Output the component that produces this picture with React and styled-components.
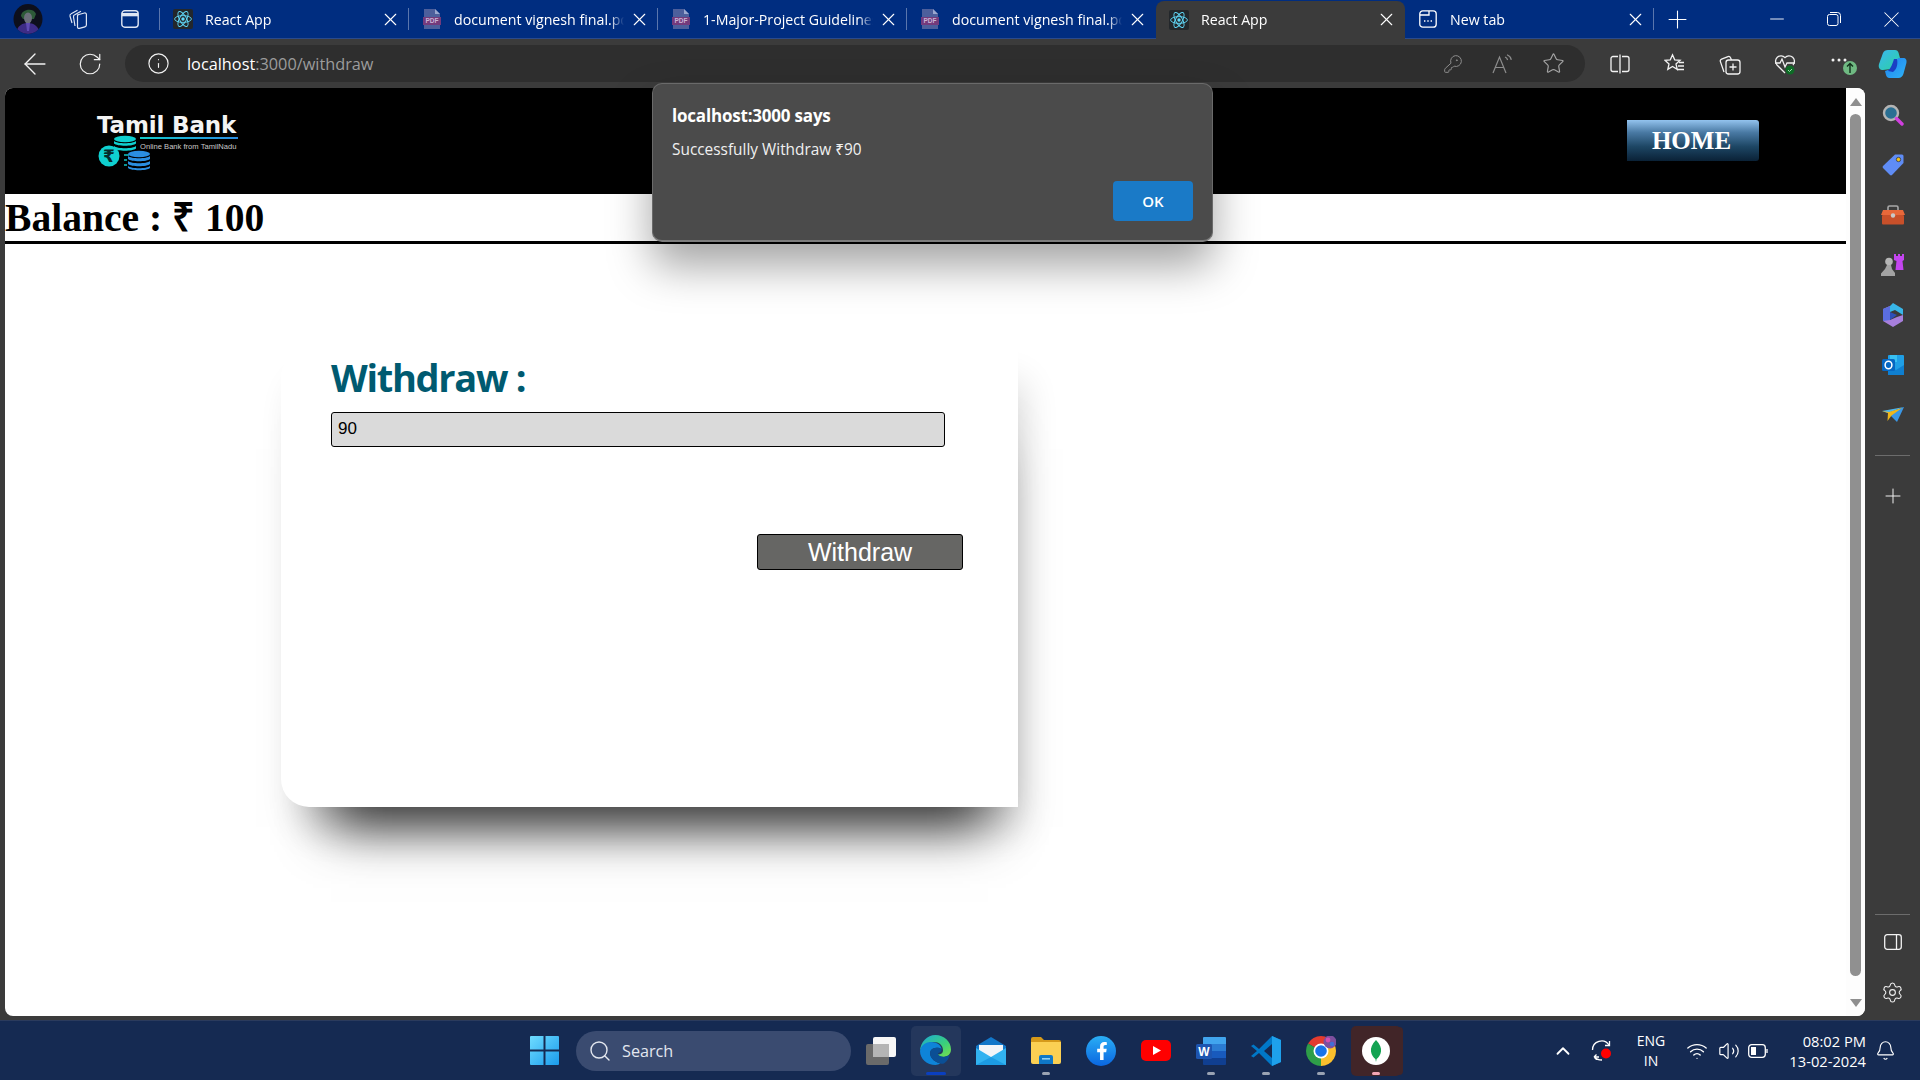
import React from 'react';
import styled, { createGlobalStyle } from 'styled-components';
import {
  ArrowLeft,
  RotateCw,
  Info,
  KeyRound,
  Star,
  X,
  Plus,
  Minus,
  Search,
  ChevronUp,
  Wifi,
  Volume2,
  Bell,
  Settings,
} from 'lucide-react';
import { FaFacebookF } from 'react-icons/fa';

const UI_FONT = '"Open Sans", "Noto Sans", sans-serif';

const GlobalStyle = createGlobalStyle`
  html, body {
    margin: 0;
    padding: 0;
    width: 1920px;
    height: 1080px;
    overflow: hidden;
    background: #3b3b3b;
  }
  * { box-sizing: border-box; }
`;

const Screen = styled.div`
  position: relative;
  width: 1920px;
  height: 1080px;
  display: flex;
  flex-direction: column;
  font-family: ${UI_FONT};
`;

/* tab strip */
const TabStrip = styled.div`
  height: 39px;
  display: flex;
  align-items: stretch;
  background: #002d80;
  border-bottom: 1px solid #2a4a8c;
  color: #fff;
`;

const Slot = styled.span`
  width: ${props => props.$w || 55}px;
  flex: none;
  display: flex;
  align-items: center;
  justify-content: center;
  color: ${props => props.$color || 'inherit'};
`;

const StripLeft = styled.div`
  width: 160px;
  flex: none;
  display: flex;
  align-items: stretch;
  border-right: 1px solid #5a76ad;
  margin: 8px 0;
`;

const Tab = styled.div`
  width: 249px;
  flex: none;
  display: flex;
  align-items: center;
  gap: 12px;
  padding: ${props => (props.$active ? '0 8px 2px 13px' : '0 8px 0 13px')};
  font-size: 14.2px;
  position: relative;
  background: ${props => (props.$active ? '#3b3b3b' : 'transparent')};
  border-radius: ${props => (props.$active ? '8px 8px 0 0' : '0')};
  height: ${props => (props.$active ? '39px' : 'auto')};
  margin-top: ${props => (props.$active ? '1px' : '0')};
  &::after {
    content: '';
    position: absolute;
    right: 0;
    top: 8px;
    bottom: 8px;
    width: 1px;
    background: ${props => (props.$divider ? '#5a76ad' : 'transparent')};
  }
`;

const TabTitle = styled.span`
  flex: 1;
  min-width: 0;
  white-space: nowrap;
  overflow: hidden;
  -webkit-mask-image: linear-gradient(to left, transparent 0, #000 14px);
  mask-image: linear-gradient(to left, transparent 0, #000 14px);
`;

const TabClose = styled(X)`
  flex: none;
  margin-left: -7px;
`;

const WindowControls = styled.div`
  margin-left: auto;
  display: flex;
`;

/* toolbar */
const Toolbar = styled.div`
  height: 49px;
  display: flex;
  align-items: center;
  padding-left: 7px;
  background: #3b3b3b;
  color: #f2f2f2;
`;

const AddressBar = styled.div`
  width: 1460px;
  height: 37px;
  margin: 0 7px 0 8px;
  display: flex;
  align-items: center;
  flex: none;
  padding: 0 7px 0 22px;
  border-radius: 19px;
  background: #2e2e2e;
`;

const Url = styled.div`
  margin-left: 17px;
  flex: 1;
  font-size: 16.3px;
  color: #9c9c9c;
  b {
    font-weight: 400;
    color: #fff;
  }
`;

/* middle */
const Middle = styled.div`
  flex: 1;
  display: flex;
  background: #3b3b3b;
  min-height: 0;
`;

const Viewport = styled.div`
  width: 1860px;
  height: 928px;
  margin-left: 5px;
  flex: none;
  display: flex;
  background: #fff;
  border-radius: 8px;
  overflow: hidden;
`;

const Page = styled.div`
  width: 1841px;
  flex: none;
  display: flex;
  flex-direction: column;
  font-family: "Liberation Serif", serif;
`;

const Header = styled.header`
  height: 106px;
  flex: none;
  display: flex;
  background: #000;
  padding: 27px 87px 0 92px;
  justify-content: space-between;
  align-items: flex-start;
`;

const Logo = styled.div`
  width: 142px;
  display: flex;
  flex-direction: column;
`;

const LogoTitle = styled.div`
  font-family: "DejaVu Sans", sans-serif;
  font-weight: 700;
  font-size: 23px;
  line-height: 20px;
  letter-spacing: -0.15px;
  color: #f4f4f4;
  white-space: nowrap;
`;

const LogoBody = styled.div`
  display: flex;
  margin-left: 1px;
`;

const LogoSide = styled.div`
  flex: none;
  width: 98px;
  margin-left: -12px;
  padding-top: 2px;
`;

const LogoRule = styled.div`
  height: 2px;
  background: linear-gradient(to right, #12c9c9, #2a8be0);
`;

const LogoTagline = styled.div`
  font-family: "Liberation Sans", sans-serif;
  font-size: 7.6px;
  line-height: 12px;
  margin-top: 2px;
  color: #c9c9c9;
  white-space: nowrap;
`;

const HomeButton = styled.button`
  width: 132px;
  height: 41px;
  margin-top: 5px;
  padding: 0 3px 0 0;
  border: 0;
  border-radius: 0 3px 3px 0;
  background: linear-gradient(to bottom, #93c3ee 0%, #4a7aa4 30%, #1d4664 65%, #0a2136 100%);
  color: #fff;
  font-family: "Liberation Serif", serif;
  font-size: 25px;
  font-weight: 700;
`;

const Balance = styled.h1`
  margin: 0;
  height: 50px;
  flex: none;
  border-bottom: 3px solid #000;
  font-size: 39.6px;
  line-height: 48px;
  font-weight: 700;
  color: #000;
  white-space: nowrap;
`;

const Card = styled.section`
  width: 737px;
  height: 458px;
  margin: 105px 0 0 276px;
  padding: 0 55px 0 50px;
  display: flex;
  flex-direction: column;
  background: #fff;
  border-radius: 28px 0 0 28px;
  box-shadow: 10px 60px 50px -40px rgba(0, 0, 0, 0.78),
    10px 28px 36px -6px rgba(0, 0, 0, 0.16);
`;

const CardTitle = styled.h2`
  margin: 4px 0 0;
  height: 59px;
  font-family: ${UI_FONT};
  font-size: 38px;
  line-height: 48px;
  font-weight: 700;
  letter-spacing: -1.3px;
  color: #005a70;
`;

const AmountInput = styled.input`
  width: 614px;
  height: 35px;
  padding: 0 6px 2px;
  border: 1.5px solid #000;
  border-radius: 3px;
  background: #dadada;
  font-family: "Liberation Sans", sans-serif;
  font-size: 17px;
  color: #000;
  outline: none;
`;

const WithdrawButton = styled.button`
  align-self: flex-end;
  width: 206px;
  height: 36px;
  margin-top: 87px;
  padding: 0;
  border: 1.5px solid #000;
  border-radius: 3px;
  background: #666664;
  color: #fff;
  font-family: "Liberation Sans", sans-serif;
  font-size: 25px;
`;

const Scrollbar = styled.div`
  flex: 1;
  display: flex;
  flex-direction: column;
  align-items: center;
  padding: 10px 0 9px;
  background: #fdfdfd;
`;

const Arrow = styled.div`
  width: 0;
  height: 0;
  border-left: 6px solid transparent;
  border-right: 6px solid transparent;
  ${props =>
    props.$down
      ? 'border-top: 8px solid #8f8f8f;'
      : 'border-bottom: 8px solid #8f8f8f;'}
`;

const Thumb = styled.div`
  width: 11px;
  height: 862px;
  margin: 8px 0 auto;
  border-radius: 6px;
  background: #909090;
`;

/* right rail */
const Rail = styled.aside`
  flex: 1;
  display: flex;
  flex-direction: column;
  align-items: center;
  padding-top: 2px;
  color: #f0f0f0;
`;

const RailItem = styled.div`
  width: 55px;
  height: ${props => props.$h || 50}px;
  flex: none;
  display: flex;
  align-items: center;
  justify-content: center;
`;

const RailRule = styled.div`
  width: 35px;
  height: 1px;
  flex: none;
  background: #6c6c6c;
  margin: ${props => props.$m};
`;

const RailBottom = styled.div`
  margin-top: auto;
  display: flex;
  flex-direction: column;
  align-items: center;
  padding-bottom: 3px;
`;

/* alert */
const Dialog = styled.div`
  position: absolute;
  left: 652px;
  top: 83px;
  width: 561px;
  height: 159px;
  padding: 20px 19px 0;
  border: 1px solid #6a6a6a;
  border-bottom: 2px solid #7d7d7d;
  border-radius: 10px;
  background: #4b4b4b;
  color: #fff;
  box-shadow: 0 24px 44px rgba(0, 0, 0, 0.36);
  display: flex;
  flex-direction: column;
`;

const DialogTitle = styled.div`
  font-size: 17px;
  line-height: 23px;
  font-weight: 700;
  letter-spacing: -0.2px;
`;

const DialogText = styled.div`
  margin-top: 13px;
  font-size: 15.4px;
  line-height: 20px;
  color: #f0f0f0;
`;

const DialogButton = styled.button`
  align-self: flex-end;
  width: 80px;
  height: 40px;
  margin-top: 21px;
  border: 0;
  border-radius: 4px;
  background: #1a7ac7;
  color: #fff;
  font-family: ${UI_FONT};
  font-size: 15px;
  font-weight: 600;
`;

/* taskbar */
const Taskbar = styled.footer`
  height: 60px;
  flex: none;
  display: flex;
  align-items: center;
  padding-left: 517px;
  background: #152a52;
  border-top: 1px solid #2b3b5d;
  color: #fff;
`;

const Tile = styled.div`
  width: 55px;
  height: 50px;
  flex: none;
  position: relative;
  display: flex;
  align-items: center;
  justify-content: center;
  &::before {
    content: '';
    position: absolute;
    inset: 0 2.5px;
    border-radius: 5px;
    background: ${props => props.$bg || 'transparent'};
    box-shadow: ${props => (props.$stack ? `3px 0 0 -1px ${props.$bg}` : 'none')};
  }
  &::after {
    content: '';
    position: absolute;
    left: 50%;
    bottom: 1px;
    width: ${props => (props.$wide ? 20 : 8)}px;
    height: 3px;
    border-radius: 2px;
    transform: translateX(-50%);
    background: ${props => props.$dot || 'transparent'};
  }
  svg {
    position: relative;
  }
`;

const SearchBox = styled.div`
  width: 275px;
  height: 40px;
  margin: 0 2px 0 4px;
  padding-left: 12px;
  flex: none;
  display: flex;
  align-items: center;
  gap: 10px;
  border-radius: 20px;
  background: #3a4b70;
  font-size: 16.2px;
  color: #e3e7ef;
`;

const Tray = styled.div`
  margin-left: auto;
  padding-right: 16px;
  display: flex;
  align-items: center;
  font-size: 14px;
  line-height: 20px;
`;

const Lang = styled.div`
  width: 56px;
  flex: none;
  text-align: center;
`;

const Clock = styled.div`
  width: 92px;
  flex: none;
  text-align: right;
  white-space: nowrap;
  font-size: 14.7px;
`;

/* drawn icons */
const ReactIcon = () => (
  <svg width="20" height="20" viewBox="0 0 20 20" style={{ flex: 'none' }}>
    <rect width="20" height="20" rx="2" fill="#23272b" />
    <g fill="none" stroke="#61dafb" strokeWidth="0.9">
      <ellipse cx="10" cy="10" rx="8.4" ry="3.4" />
      <ellipse cx="10" cy="10" rx="8.4" ry="3.4" transform="rotate(60 10 10)" />
      <ellipse cx="10" cy="10" rx="8.4" ry="3.4" transform="rotate(120 10 10)" />
    </g>
    <circle cx="10" cy="10" r="1.7" fill="#61dafb" />
  </svg>
);

const PdfIcon = () => (
  <svg width="20" height="20" viewBox="0 0 20 20" style={{ flex: 'none' }}>
    <path d="M2 0h11l5 5v15H2z" fill="#4d5f9c" />
    <path d="M13 0l5 5h-5z" fill="#9aa7cf" />
    <rect x="1" y="8" width="18" height="8" fill="#733b7c" />
    <text x="10" y="14.4" textAnchor="middle" fontSize="6.5" fontWeight="700" fontFamily="Liberation Sans" fill="#c9b3d6">
      PDF
    </text>
  </svg>
);

const NewTabIcon = () => (
  <svg width="18" height="18" viewBox="0 0 18 18" fill="none" stroke="#fff" strokeWidth="1.3" style={{ flex: 'none', margin: '0 1px' }}>
    <rect x="0.8" y="0.8" width="16.4" height="16.4" rx="3" />
    <path d="M1 5h9V1" />
    <path d="M5 11h1.4M8.3 11h1.4M11.6 11H13" strokeWidth="1.6" />
  </svg>
);

const Avatar = () => (
  <svg width="30" height="30" viewBox="0 0 30 30">
    <defs>
      <clipPath id="avatarClip">
        <ellipse cx="15" cy="15" rx="14.5" ry="15" />
      </clipPath>
    </defs>
    <g clipPath="url(#avatarClip)">
      <rect width="30" height="30" fill="#0d0f1c" />
      <path d="M8 12c0-7 13-9 15-2l-2 5H10z" fill="#2d5a38" />
      <ellipse cx="15" cy="14" rx="4" ry="5.5" fill="#6b6f7a" />
      <path d="M3 30c1-9 7-11 12-11s11 3 12 11z" fill="#3d2c86" />
      <path d="M13 19h4l-1 8h-2z" fill="#5f4bb5" />
    </g>
  </svg>
);

const CollectionsIcon = () => (
  <svg width="22" height="22" viewBox="0 0 22 22" fill="none" stroke="#dfe6f3" strokeWidth="1.2">
    <path d="M10 7l7.500-2a1.500 1.500 0 0 1 1.900 1.400v10.600a2 2 0 0 1-1.500 1.900l-5.500 1.500a1.500 1.500 0 0 1-1.900-1.400V8.800a2 2 0 0 1 .5-1.800z" />
    <path d="M8 18 6.500 9a2 2 0 0 1 1.300-2.200L14 3.200" />
    <path d="M5 15 3 8a2 2 0 0 1 1.200-2.300L10.500 2.200" />
  </svg>
);

const VerticalTabsIcon = () => (
  <svg width="18" height="18" viewBox="0 0 18 18" fill="none" stroke="#dfe6f3" strokeWidth="1.4">
    <rect x="0.8" y="0.8" width="16.4" height="16.4" rx="3" />
    <path d="M1 4.600h16" strokeWidth="3.400" />
  </svg>
);

const RestoreIcon = () => (
  <svg width="14" height="14" viewBox="0 0 14 14" fill="none" stroke="#fff" strokeWidth="1">
    <rect x="0.5" y="2.5" width="10.5" height="11" rx="2" />
    <path d="M3 .5h7.500a3 3 0 0 1 3 3V11" />
  </svg>
);

const ReadAloudIcon = () => (
  <svg width="22" height="20" viewBox="0 0 22 20" fill="none" stroke="#8d8d8d" strokeWidth="1.2">
    <path d="M1 19 7.500 3 14 19M3.400 13.500h8.200" />
    <path d="M13 3c1.500.6 2.300 1.600 2.600 3M15 .8c2.600 1 3.800 2.600 4.300 5" />
  </svg>
);

const SplitIcon = () => (
  <svg width="20" height="20" viewBox="0 0 20 20" fill="none" stroke="#f2f2f2" strokeWidth="1.3">
    <path d="M8 2.500H3a2 2 0 0 0-2 2v11a2 2 0 0 0 2 2h5M12 2.500h5a2 2 0 0 1 2 2v11a2 2 0 0 1-2 2h-5M10 .5v19" />
  </svg>
);

const FavoritesIcon = () => (
  <svg width="21" height="21" viewBox="0 0 21 21" fill="none" stroke="#f2f2f2" strokeWidth="1.3">
    <path d="M8.500 1.800l2.200 5 5.400.5-4.100 3.600 1.200 5.400-4.700-2.800-4.700 2.800 1.200-5.400L.9 7.300l5.400-.5z" />
    <path d="M15 9.500h5M14 13h6M13 16.500h7" />
  </svg>
);

const AddCollectionIcon = () => (
  <svg width="22" height="22" viewBox="0 0 22 22" fill="none" stroke="#f2f2f2" strokeWidth="1.3">
    <rect x="7" y="7" width="14" height="14" rx="2.500" />
    <path d="M14 10.500v7M10.500 14h7" />
    <path d="M5 19 1.400 8.600a2 2 0 0 1 1.200-2.500L9 3.600a2 2 0 0 1 2.500 1.100L12.500 7" />
  </svg>
);

const HealthIcon = () => (
  <svg width="22" height="22" viewBox="0 0 22 22">
    <path d="M11 20 3 12a5.400 5.400 0 0 1 8-7.400A5.400 5.400 0 0 1 19 12" fill="none" stroke="#f2f2f2" strokeWidth="1.3" />
    <path d="M1 10h5l2-4 3 8 2-4h8" fill="none" stroke="#f2f2f2" strokeWidth="1.3" />
    <circle cx="16" cy="17" r="4.500" fill="#0e6b26" />
    <path d="m14 17 1.500 1.500 2.500-2.500" fill="none" stroke="#9fdcae" strokeWidth="1" />
  </svg>
);

const MoreIcon = () => (
  <svg width="38" height="26" viewBox="-10 0 38 26">
    <circle cx="3" cy="9" r="1.500" fill="#f2f2f2" />
    <circle cx="9" cy="9" r="1.500" fill="#f2f2f2" />
    <circle cx="15" cy="9" r="1.500" fill="#f2f2f2" />
    <circle cx="20" cy="17" r="7" fill="#6fb982" />
    <path d="M20 22v-9M17 15.500l3-3 3 3" fill="none" stroke="#10301a" strokeWidth="1.400" />
  </svg>
);

const CopilotIcon = () => (
  <svg width="30" height="30" viewBox="0 0 30 30">
    <defs>
      <linearGradient id="copA" x1="0" y1="0" x2="1" y2="1">
        <stop offset="0" stopColor="#3bb6f0" />
        <stop offset="1" stopColor="#2ad3a0" />
      </linearGradient>
      <linearGradient id="copB" x1="0" y1="0" x2="1" y2="1">
        <stop offset="0" stopColor="#1f7ff0" />
        <stop offset="1" stopColor="#2fb4f5" />
      </linearGradient>
    </defs>
    <path d="M11 1h7c2 0 3 1 3.600 3L23 9l-9 11-8 1c-3 0-5-2-4-6l4-11c.8-2 2.600-3 5-3z" fill="url(#copA)" />
    <path d="M21 9h5c3 0 4 2 3.400 5l-3 11c-.6 2-2.400 4-5 4h-9c-2 0-3-2-3.400-3L8 22l6-2c3-2 5-7 7-11z" fill="url(#copB)" />
    <path d="M17 10c-1.500 5-3 9-6 12l5 1c4-3 5-8 4-13z" fill="#1a3fc4" />
  </svg>
);

const LogoCoins = () => (
  <svg width="54" height="37" viewBox="0 0 54 37" style={{ flex: 'none' }}>
    <g fill="#0fd0d0">
      <ellipse cx="27" cy="4" rx="11" ry="3.300" />
      <path d="M16 6c3 3 19 3 22 0v2.500c-3 3-19 3-22 0z" />
      <path d="M16 11c3 3 19 3 22 0v2.500c-3 3-19 3-22 0z" />
      <circle cx="11" cy="21" r="10.500" />
      <path d="M26 19h5v2h-5zM26 24h3v2h-3zM26 29h3v2h-3z" opacity="0.7" />
    </g>
    <text x="11" y="27" textAnchor="middle" fontSize="17" fontWeight="700" fontFamily="DejaVu Sans" fill="#062a2a">₹</text>
    <g fill="#2b8ee0">
      <ellipse cx="41" cy="19" rx="11" ry="3.300" />
      <path d="M30 21c3 3 19 3 22 0v3c-3 3-19 3-22 0z" />
      <path d="M30 26c3 3 19 3 22 0v3c-3 3-19 3-22 0z" />
      <path d="M30 31c3 3 19 3 22 0v2c-3 3-19 3-22 0z" />
    </g>
  </svg>
);

const SearchExtIcon = () => (
  <svg width="22" height="22" viewBox="0 0 22 22">
    <circle cx="9" cy="9" r="7" fill="#2a6f93" stroke="#b4b4b4" strokeWidth="2.400" />
    <path d="M14.500 14.500 20 20" stroke="#d13fe0" strokeWidth="3.400" strokeLinecap="round" />
  </svg>
);

const TagIcon = () => (
  <svg width="22" height="22" viewBox="0 0 22 22">
    <path d="M13 .5h7a1.500 1.500 0 0 1 1.500 1.500v7L10 21a1.500 1.500 0 0 1-2 0L1 14a1.500 1.500 0 0 1 0-2z" fill="#5f8cf5" />
    <circle cx="16.500" cy="5.500" r="2.200" fill="#f3c317" stroke="#23345c" strokeWidth="0.8" />
  </svg>
);

const ToolboxIcon = () => (
  <svg width="24" height="20" viewBox="0 0 24 20">
    <path d="M7 6V2.500A1.500 1.500 0 0 1 8.500 1h7A1.500 1.500 0 0 1 17 2.500V6" fill="none" stroke="#a8a8a8" strokeWidth="1.600" />
    <path d="M2 5h20l2 5H0z" fill="#e8683a" />
    <rect x="1" y="10" width="22" height="9.500" rx="1" fill="#c8502a" />
    <circle cx="12" cy="10.500" r="2.200" fill="#c9c9c9" />
  </svg>
);

const ChessIcon = () => (
  <svg width="24" height="24" viewBox="0 0 24 24">
    <circle cx="8" cy="8.500" r="3.800" fill="#b5b5b5" />
    <path d="M6 12h4l1 4 3 4v3H0v-2.500L4 16z" fill="#a3a3a3" />
    <path d="M13 1h2v2h2V1h2v2h2V1h2v6l-1.500 1 1 9H14.500l1-9L13 7z" fill="#c445f0" />
  </svg>
);

const OfficeIcon = () => (
  <svg width="22" height="24" viewBox="0 0 22 24">
    <path d="M11 0 21 6v6l-8-5-5 2V3z" fill="#38b6e8" />
    <path d="M1 6l7-3v14l7-3 6-2v6l-10 6-10-6z" fill="#a77fdc" />
    <path d="M1 6l7-3v14l-7 1z" fill="#5a6ee0" />
    <path d="M8 9l7 3-7 5z" fill="#2e4fb8" />
  </svg>
);

const OutlookIcon = () => (
  <svg width="22" height="22" viewBox="0 0 22 22">
    <rect x="6" y="1" width="16" height="20" rx="1" fill="#1f9fe6" />
    <path d="M8 1h7v7H8z" fill="#38c0f2" />
    <path d="M6 11l8 5 8-5v10H6z" fill="#0f7fd0" />
    <rect x="0" y="5" width="13" height="12" rx="1.500" fill="#0667c2" />
    <ellipse cx="6.500" cy="11" rx="3.400" ry="3.800" fill="none" stroke="#fff" strokeWidth="1.500" />
  </svg>
);

const PlaneIcon = () => (
  <svg width="22" height="16" viewBox="0 0 22 16">
    <path d="M0 4 22 0 6 6z" fill="#4db7ef" />
    <path d="M6 6 22 0 15 15z" fill="#3a97e6" />
    <path d="M0 4 6 6l-.500 8 4-5.500L20 1 7 5z" fill="#f0b71a" />
  </svg>
);

const PanelIcon = () => (
  <svg width="18" height="16" viewBox="0 0 18 16" fill="none" stroke="#f2f2f2" strokeWidth="1.300">
    <rect x="0.700" y="0.700" width="16.600" height="14.600" rx="2.500" />
    <path d="M12.500 1v14" />
  </svg>
);

const WindowsIcon = () => (
  <svg width="29" height="29" viewBox="0 0 29 29">
    <defs>
      <linearGradient id="winG" x1="0" y1="0" x2="1" y2="1">
        <stop offset="0" stopColor="#6fdcff" />
        <stop offset="1" stopColor="#1a9bec" />
      </linearGradient>
    </defs>
    <path d="M1 0h12.500v13.500H0V1a1 1 0 0 1 1-1zM15.500 0H28a1 1 0 0 1 1 1v12.500H15.500zM0 15.500h13.500V29H1a1 1 0 0 1-1-1zM15.500 15.500H29V28a1 1 0 0 1-1 1H15.500z" fill="url(#winG)" />
  </svg>
);

const TaskViewIcon = () => (
  <svg width="30" height="28" viewBox="0 0 30 28">
    <rect x="0" y="7" width="23" height="21" rx="2" fill="#6a6a6a" />
    <rect x="7" y="0" width="23" height="20" rx="2" fill="#f7f7f7" />
    <rect x="7" y="7" width="16" height="13" fill="#b5b5b5" />
  </svg>
);

const EdgeIcon = () => (
  <svg width="31" height="31" viewBox="0 0 31 31">
    <defs>
      <linearGradient id="edgeG" x1="0" y1="0" x2="1" y2="1">
        <stop offset="0" stopColor="#1ba9d8" />
        <stop offset="0.6" stopColor="#3bd07a" />
        <stop offset="1" stopColor="#7be04a" />
      </linearGradient>
    </defs>
    <path d="M15.500 0C24 0 31 6.500 31 14.500c0 5-4 7.500-8 7.500-3 0-5-1-5-2.500 3 0 5-1.500 5-4C23 10 19 7 14 7 7 7 1.500 11 0 16 .5 7 7 0 15.500 0z" fill="url(#edgeG)" />
    <path d="M0 16c1-6 6-9 11-9 6 0 10 3 10.500 7-3-2-9-2-11 2-2 5 3 11 10 12.500-1.500.5-3.500 1.500-5 1.500C7 30 0 24 0 16z" fill="#0e84d8" />
    <path d="M10.500 16c2-4 8-4 11-2 .5 1.500-.5 3-2 3.500-1.500.5-2 1.500-1 2.500 3 2.500 8 2 11.500-.5C28 26 24 30 20.500 28.500 13.500 27 8.500 21 10.500 16z" fill="#0b4f95" />
  </svg>
);

const MailIcon = () => (
  <svg width="30" height="28" viewBox="0 0 30 28">
    <path d="M15 0 30 9v19H0V9z" fill="#1277c9" />
    <path d="M3 8h24v8l-12 7-12-7z" fill="#f2f5f8" />
    <path d="M0 11l15 9 15-9v17H0z" fill="#31b2f0" />
    <path d="M0 28l15-8 15 8z" fill="#1c9be3" />
  </svg>
);

const FolderIcon = () => (
  <svg width="30" height="27" viewBox="0 0 30 27">
    <path d="M0 2a2 2 0 0 1 2-2h8l3 3h15a2 2 0 0 1 2 2v4H0z" fill="#d69a1a" />
    <path d="M0 5h30v20a2 2 0 0 1-2 2H2a2 2 0 0 1-2-2z" fill="#fbd053" />
    <path d="M8 27v-7a2 2 0 0 1 2-2h10a2 2 0 0 1 2 2v7z" fill="#0f78c8" />
    <rect x="11" y="21" width="8" height="1.600" fill="#8fd0f5" />
  </svg>
);

const FacebookIcon = () => (
  <svg width="30" height="30" viewBox="0 0 30 30">
    <defs>
      <linearGradient id="fbG" x1="0" y1="0" x2="0" y2="1">
        <stop offset="0" stopColor="#2aaef5" />
        <stop offset="1" stopColor="#0a66e0" />
      </linearGradient>
    </defs>
    <circle cx="15" cy="15" r="15" fill="url(#fbG)" />
    <FaFacebookF x="7" y="6" width="16" height="20" size="18" color="#fff" />
  </svg>
);

const YoutubeIcon = () => (
  <svg width="30" height="21" viewBox="0 0 30 21">
    <rect width="30" height="21" rx="5" fill="#f00" />
    <path d="M12 6l8 4.500-8 4.500z" fill="#fff" />
  </svg>
);

const WordIcon = () => (
  <svg width="30" height="28" viewBox="0 0 30 28">
    <path d="M7 1a1 1 0 0 1 1-1h21a1 1 0 0 1 1 1v6H7z" fill="#41a5ee" />
    <rect x="7" y="7" width="23" height="7" fill="#2b7cd3" />
    <rect x="7" y="14" width="23" height="7" fill="#185abd" />
    <path d="M7 21h23v6a1 1 0 0 1-1 1H8a1 1 0 0 1-1-1z" fill="#103f91" />
    <rect x="0" y="7" width="16" height="15" rx="1.500" fill="#1d55b0" />
    <text x="8" y="18.500" textAnchor="middle" fontSize="12" fontWeight="700" fontFamily="Liberation Sans" fill="#fff">W</text>
  </svg>
);

const VscodeIcon = () => (
  <svg width="30" height="30" viewBox="0 0 30 30">
    <path d="M21 0 30 4v22l-9 4L8 17l-5.500 4.500L0 20l6-5-6-5 2.500-1.500L8 13z" fill="#0078c8" />
    <path d="M21 0 30 4v22l-9 4z" fill="#1ea1ec" />
    <path d="M21 8 13 15l8 7z" fill="#152a52" />
  </svg>
);

const sector = (from, to) => {
  const rad = a => (a * Math.PI) / 180;
  const p = a => `${15 + 15 * Math.cos(rad(a))} ${15 + 15 * Math.sin(rad(a))}`;
  return `M15 15L${p(from)}A15 15 0 0 1 ${p(to)}Z`;
};

const ChromeIcon = () => (
  <svg width="30" height="30" viewBox="0 0 30 30">
    <path d={sector(-150, -30)} fill="#e33b2e" />
    <path d={sector(-30, 90)} fill="#fbc02d" />
    <path d={sector(90, 210)} fill="#2e9e48" />
    <circle cx="15" cy="15" r="7.500" fill="#fff" />
    <circle cx="15" cy="15" r="5.800" fill="#1a73e8" />
    <circle cx="24" cy="6" r="6.500" fill="#7d4f9e" />
    <circle cx="22" cy="4" r="2.400" fill="#d24fb0" />
    <circle cx="26" cy="8" r="2.200" fill="#3f6fd8" />
  </svg>
);

const MongoIcon = () => (
  <svg width="28" height="28" viewBox="0 0 28 28">
    <circle cx="14" cy="14" r="14" fill="#fff" />
    <path d="M14 3c4 4 5.500 8 5 11.500-.5 3.500-2.500 6-4.400 7.500l-.6 3-.6-3C11.500 20.500 9.500 18 9 14.500 8.500 11 10 7 14 3z" fill="#13a352" />
  </svg>
);

const SyncIcon = () => (
  <svg width="24" height="22" viewBox="0 0 24 22">
    <g fill="none" stroke="#fff" strokeWidth="1.300">
      <path d="M1.500 10A9 9 0 0 1 18 5" />
      <path d="M18.500 1v4.500H14" />
      <path d="M3 17h5M3 17l2.500-2.500M3 17l2.500 2.500M3 17c2 2 5 3 8 3" />
    </g>
    <circle cx="15" cy="13.500" r="5" fill="#f00" />
  </svg>
);

const BatteryIcon = () => (
  <svg width="20" height="14" viewBox="0 0 20 14" fill="none" stroke="#fff" strokeWidth="1.300">
    <rect x="0.700" y="0.700" width="16.600" height="12.600" rx="3" />
    <rect x="3" y="3" width="5" height="8" fill="#fff" stroke="none" />
    <path d="M19 5v4" />
  </svg>
);

const tabs = [
  { icon: <ReactIcon />, title: 'React App', divider: true },
  { icon: <PdfIcon />, title: 'document vignesh final.pdf', divider: true },
  { icon: <PdfIcon />, title: '1-Major-Project Guidelines.pdf', divider: true },
  { icon: <PdfIcon />, title: 'document vignesh final.pdf' },
  { icon: <ReactIcon />, title: 'React App', active: true },
  { icon: <NewTabIcon />, title: 'New tab', divider: true },
];

const taskbarApps = [
  { icon: <TaskViewIcon /> },
  { icon: <EdgeIcon />, bg: '#24375c', dot: '#0a3fc0', wide: true },
  { icon: <MailIcon /> },
  { icon: <FolderIcon />, dot: '#9aa3b3' },
  { icon: <FacebookIcon /> },
  { icon: <YoutubeIcon /> },
  { icon: <WordIcon />, dot: '#9aa3b3' },
  { icon: <VscodeIcon />, dot: '#9aa3b3' },
  { icon: <ChromeIcon />, dot: '#9aa3b3' },
  { icon: <MongoIcon />, bg: '#412528', dot: '#f4a6b4', stack: true },
];

const railIcons = [
  <SearchExtIcon />,
  <TagIcon />,
  <ToolboxIcon />,
  <ChessIcon />,
  <OfficeIcon />,
  <OutlookIcon />,
  <PlaneIcon />,
];

const App = () => (
  <Screen>
    <GlobalStyle />
    <TabStrip>
      <StripLeft>
        <Slot $w={56}>
          <Avatar />
        </Slot>
        <Slot $w={44}>
          <CollectionsIcon />
        </Slot>
        <Slot $w={59}>
          <VerticalTabsIcon />
        </Slot>
      </StripLeft>
      {tabs.map((tab, index) => (
        <Tab key={index} $active={tab.active} $divider={tab.divider}>
          {tab.icon}
          <TabTitle>{tab.title}</TabTitle>
          <TabClose size={21} strokeWidth={1.3} />
        </Tab>
      ))}
      <Slot $w={46}>
        <Plus size={29} strokeWidth={0.9} />
      </Slot>
      <WindowControls>
        <Slot $w={57}>
          <Minus size={22} strokeWidth={1} />
        </Slot>
        <Slot $w={57}>
          <RestoreIcon />
        </Slot>
        <Slot $w={58}>
          <X size={27} strokeWidth={0.9} />
        </Slot>
      </WindowControls>
    </TabStrip>

    <Toolbar>
      <Slot>
        <ArrowLeft size={34} strokeWidth={0.95} />
      </Slot>
      <Slot>
        <RotateCw size={26} strokeWidth={1.1} />
      </Slot>
      <AddressBar>
        <Info size={23} strokeWidth={1.2} />
        <Url>
          <b>localhost</b>:3000/withdraw
        </Url>
        <Slot $w={50} $color="#8d8d8d">
          <KeyRound size={20} strokeWidth={1.2} />
        </Slot>
        <Slot $w={50}>
          <ReadAloudIcon />
        </Slot>
        <Slot $w={50} $color="#a5a5a5">
          <Star size={23} strokeWidth={1.2} />
        </Slot>
      </AddressBar>
      <Slot>
        <SplitIcon />
      </Slot>
      <Slot>
        <FavoritesIcon />
      </Slot>
      <Slot>
        <AddCollectionIcon />
      </Slot>
      <Slot>
        <HealthIcon />
      </Slot>
      <Slot $w={53}>
        <MoreIcon />
      </Slot>
      <Slot $w={53}>
        <CopilotIcon />
      </Slot>
    </Toolbar>

    <Middle>
      <Viewport>
        <Page>
          <Header>
            <Logo>
              <LogoTitle>Tamil Bank</LogoTitle>
              <LogoBody>
                <LogoCoins />
                <LogoSide>
                  <LogoRule />
                  <LogoTagline>Online Bank from TamilNadu</LogoTagline>
                </LogoSide>
              </LogoBody>
            </Logo>
            <HomeButton>HOME</HomeButton>
          </Header>
          <Balance>Balance : ₹ 100</Balance>
          <Card>
            <CardTitle>Withdraw :</CardTitle>
            <AmountInput defaultValue="90" />
            <WithdrawButton>Withdraw</WithdrawButton>
          </Card>
        </Page>
        <Scrollbar>
          <Arrow />
          <Thumb />
          <Arrow $down />
        </Scrollbar>
      </Viewport>
      <Rail>
        {railIcons.map((icon, index) => (
          <RailItem key={index}>{icon}</RailItem>
        ))}
        <RailRule $m="15px 0 0" />
        <RailItem $h={80}>
          <Plus size={24} strokeWidth={1} />
        </RailItem>
        <RailBottom>
          <RailRule $m="0 0 2px" />
          <RailItem>
            <PanelIcon />
          </RailItem>
          <RailItem>
            <Settings size={23} strokeWidth={1.15} />
          </RailItem>
        </RailBottom>
      </Rail>
    </Middle>

    <Taskbar>
      <Tile>
        <WindowsIcon />
      </Tile>
      <SearchBox>
        <Search size={24} strokeWidth={1.4} />
        Search
      </SearchBox>
      {taskbarApps.map((app, index) => (
        <Tile key={index} $bg={app.bg} $dot={app.dot} $wide={app.wide} $stack={app.stack}>
          {app.icon}
        </Tile>
      ))}
      <Tray>
        <Slot $w={40}>
          <ChevronUp size={22} strokeWidth={2} />
        </Slot>
        <Slot $w={40}>
          <SyncIcon />
        </Slot>
        <Lang>
          ENG
          <br />
          IN
        </Lang>
        <Slot $w={36}>
          <Wifi size={22} strokeWidth={1.5} />
        </Slot>
        <Slot $w={27}>
          <Volume2 size={22} strokeWidth={1.3} />
        </Slot>
        <Slot $w={32}>
          <BatteryIcon />
        </Slot>
        <Clock>
          08:02 PM
          <br />
          13-02-2024
        </Clock>
        <Slot $w={38}>
          <Bell size={21} strokeWidth={1.3} />
        </Slot>
      </Tray>
    </Taskbar>

    <Dialog>
      <DialogTitle>localhost:3000 says</DialogTitle>
      <DialogText>Successfully Withdraw ₹90</DialogText>
      <DialogButton>OK</DialogButton>
    </Dialog>
  </Screen>
);

export default App;
